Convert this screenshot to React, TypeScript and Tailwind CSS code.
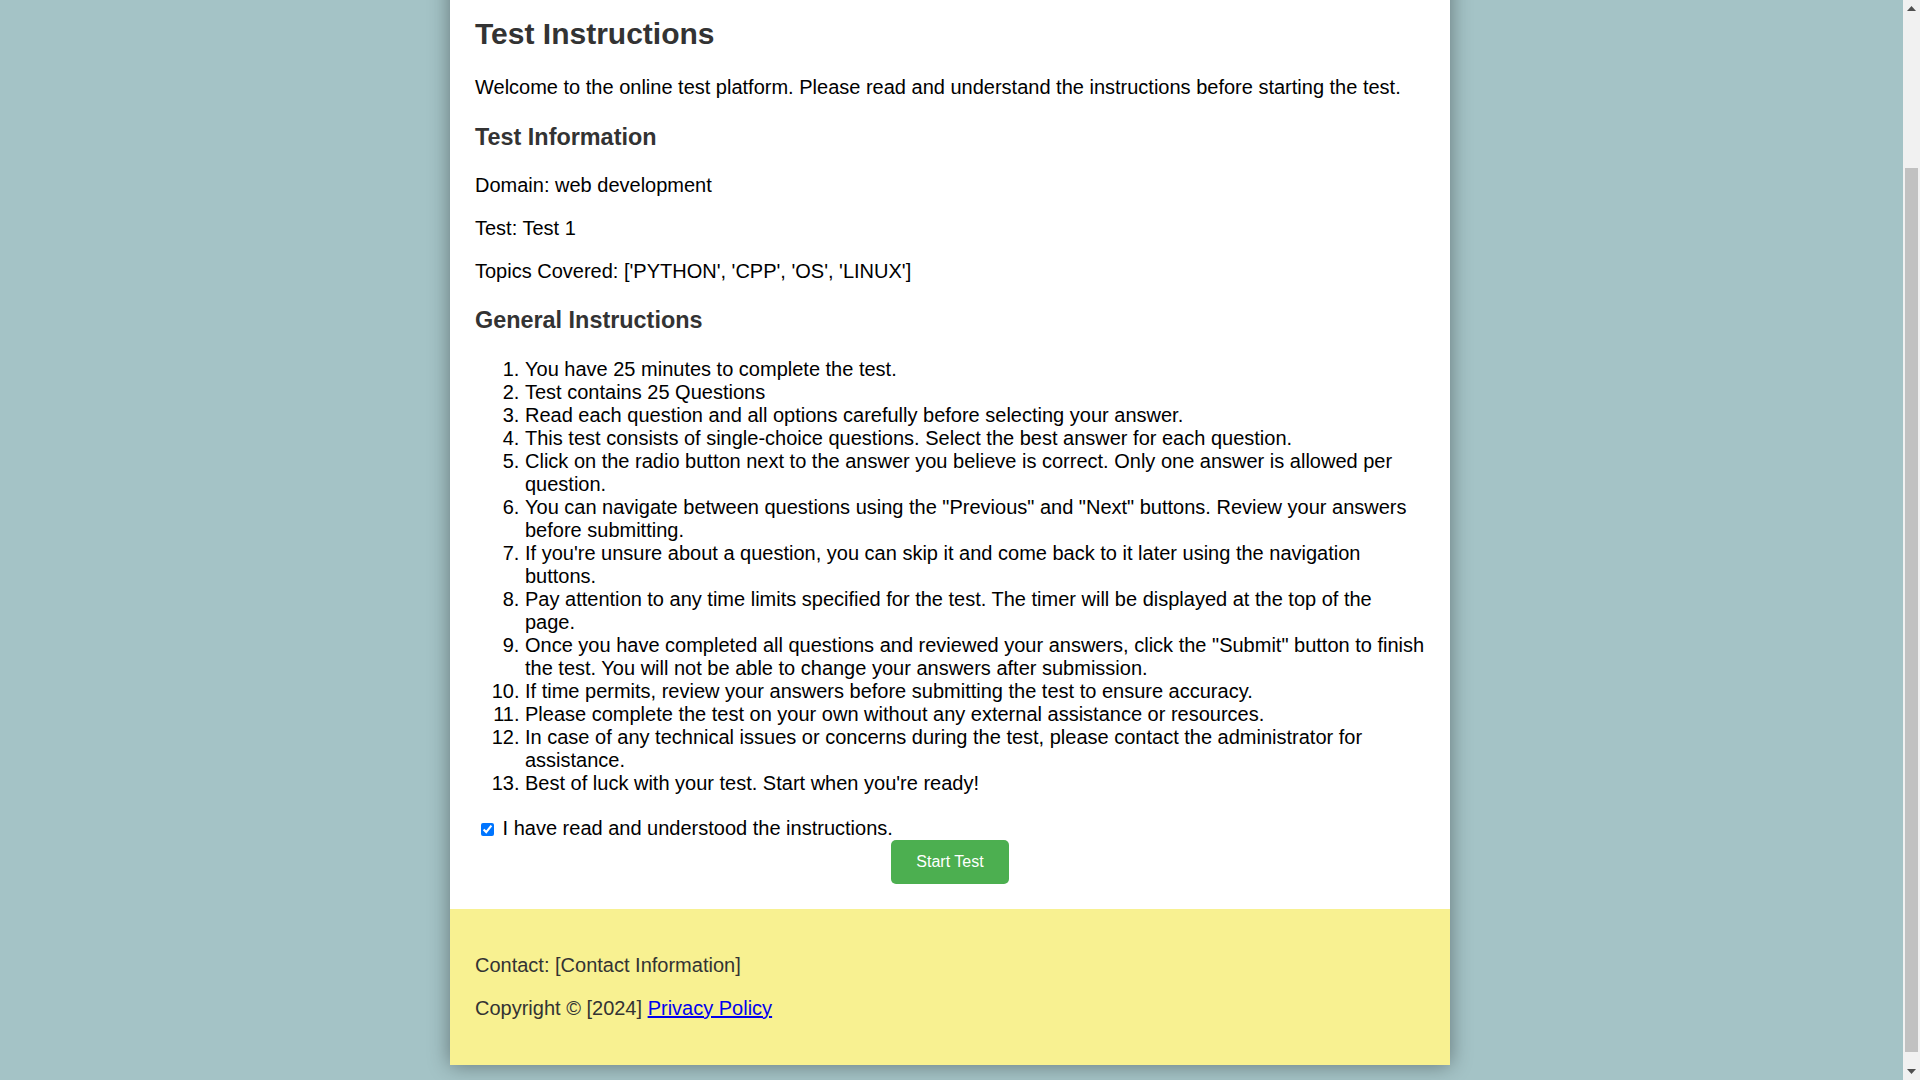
import React, { useLayoutEffect } from "react";

const items = [
  "You have 25 minutes to complete the test.",
  "Test contains 25 Questions",
  "Read each question and all options carefully before selecting your answer.",
  "This test consists of single-choice questions. Select the best answer for each question.",
  "Click on the radio button next to the answer you believe is correct. Only one answer is allowed per question.",
  'You can navigate between questions using the "Previous" and "Next" buttons. Review your answers before submitting.',
  "If you're unsure about a question, you can skip it and come back to it later using the navigation buttons.",
  "Pay attention to any time limits specified for the test. The timer will be displayed at the top of the page.",
  'Once you have completed all questions and reviewed your answers, click the "Submit" button to finish the test. You will not be able to change your answers after submission.',
  "If time permits, review your answers before submitting the test to ensure accuracy.",
  "Please complete the test on your own without any external assistance or resources.",
  "In case of any technical issues or concerns during the test, please contact the administrator for assistance.",
  "Best of luck with your test. Start when you're ready!",
];

function Scrollbar() {
  return (
    <div className="fixed top-0 right-0 h-screen w-[17px] bg-[#f1f1f1] flex flex-col items-center">
      <div className="h-[17px] w-full flex items-center justify-center">
        <svg width="9" height="5" viewBox="0 0 9 5">
          <polygon points="4.5,0 9,5 0,5" fill="#505050" />
        </svg>
      </div>
      <div className="w-full flex-1 relative">
        <div className="absolute left-[2px] right-[2px] top-[151px] bottom-[11px] bg-[#c1c1c1]" />
      </div>
      <div className="h-[17px] w-full flex items-center justify-center">
        <svg width="9" height="5" viewBox="0 0 9 5">
          <polygon points="0,0 9,0 4.5,5" fill="#505050" />
        </svg>
      </div>
    </div>
  );
}

export default function App() {
  useLayoutEffect(() => {
    window.scrollTo(0, document.documentElement.scrollHeight);
  }, []);

  return (
    <div className="min-h-screen bg-[#a4c3c6] pt-[168px] pb-[15px] pr-[20px] font-['Liberation_Sans',Arial,sans-serif] text-black">
      <div className="w-[1000px] mx-auto bg-white shadow-[0_0_20px_rgba(0,0,0,0.4)]">
        <div className="p-[25px] flow-root">
          <h2 className="text-[30px] leading-[34px] font-bold text-[#333] my-[25px]">Test Instructions</h2>
          <p className="text-[20px] leading-[23px] my-[20px]">
            Welcome to the online test platform. Please read and understand the instructions before starting the test.
          </p>
          <h3 className="text-[23.4px] leading-[27px] font-bold text-[#333] mt-[24.5px] mb-[23.4px]">Test Information</h3>
          <p className="text-[20px] leading-[23px] my-[20px]">Domain: web development</p>
          <p className="text-[20px] leading-[23px] my-[20px]">Test: Test 1</p>
          <p className="text-[20px] leading-[23px] my-[20px]">Topics Covered: ['PYTHON', 'CPP', 'OS', 'LINUX']</p>
          <h3 className="text-[23.4px] leading-[27px] font-bold text-[#333] mt-[24.5px] mb-[23.4px]">General Instructions</h3>
          <ol className="list-decimal pl-[50px] text-[20px] leading-[23px] my-[20px]">
            {items.map((t, i) => (
              <li key={i}>{t}</li>
            ))}
          </ol>
          <div className="mt-[22px] text-[20px] leading-[23px]">
            <label>
              <input
                type="checkbox"
                defaultChecked
                className="w-[13px] h-[13px] ml-[6px] mr-[3px] align-[-1px] accent-[#0075ff]"
              />{" "}
              I have read and understood the instructions.
            </label>
          </div>
          <button className="block mx-auto bg-[#4caf50] text-white text-[16px] leading-[18px] px-[25px] py-[13px] rounded-[5px] font-['Liberation_Sans',Arial,sans-serif]">
            Start Test
          </button>
        </div>
        <div className="bg-[#f8f191] p-[25px] text-[#333] text-[20px] leading-[23px]">
          <p className="my-[20px]">Contact: [Contact Information]</p>
          <p className="my-[20px]">
            Copyright © [2024]{" "}
            <a href="#" className="text-[#0000ee] underline">
              Privacy Policy
            </a>
          </p>
        </div>
      </div>
      <Scrollbar />
    </div>
  );
}
